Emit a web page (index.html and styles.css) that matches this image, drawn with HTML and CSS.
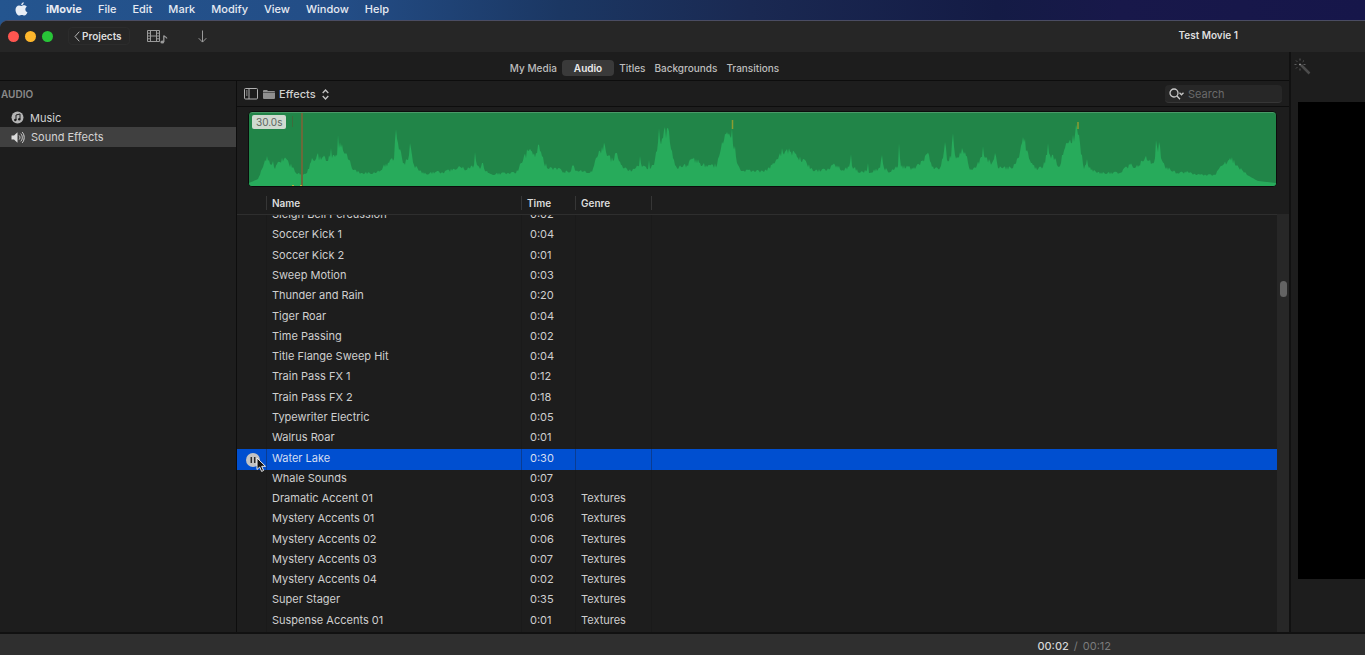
FILE: index.html
```
<!DOCTYPE html>
<html lang="en">
<head>
    <meta charset="UTF-8">
    <meta name="viewport" content="width=device-width, initial-scale=1.0">
    <title>iMovie</title>
    <link rel="stylesheet" href="styles.css">
</head>
<body>

    <nav class="menubar">
        <button class="apple" aria-label="Apple menu">
            <svg width="13" height="14" viewBox="0 0 13 14"><path fill="#e8eef6" d="M8.8 0.2c.1 1.5-1.2 2.9-2.6 2.9C6 1.700 7.300.4 8.800.2zM6.500 3.900c.5 0 1.400-.7 2.500-.7 1.300 0 2.300.6 2.900 1.500-2.300 1.400-1.900 4.500.5 5.500-.6 1.500-1.700 3.400-3 3.400-1 0-1.400-.6-2.600-.6s-1.600.6-2.500.6C2.300 13.600.5 10.500.5 7.700c0-2.700 1.700-4.300 3.500-4.300 1.100 0 1.900.5 2.500.5z"/></svg>
        </button>
        <button class="app-name">iMovie</button>
        <button>File</button>
        <button>Edit</button>
        <button>Mark</button>
        <button>Modify</button>
        <button>View</button>
        <button>Window</button>
        <button>Help</button>
    </nav>

    <div class="window">
        <header class="toolbar">
            <div class="lights">
                <button class="light red" aria-label="Close"></button>
                <button class="light yellow" aria-label="Minimize"></button>
                <button class="light green" aria-label="Zoom"></button>
            </div>
            <button class="projects">
                <svg width="6" height="11" viewBox="0 0 6 11"><path d="M5.300.7L1 5.500l4.300 4.800" fill="none" stroke="#b8b8b8"/></svg>
                Projects
            </button>
            <button class="tool media" aria-label="Media">
                <svg width="21" height="15" viewBox="0 0 21 15" fill="none" stroke="#9a9a9a">
                    <path d="M.5 1.500h12v11H.5zM3.500 1.500v11M9.500 1.500v11M3.500 7h6M.5 4.200h3M.5 7h3M.5 9.800h3M9.500 4.200h3M9.500 7h3M9.500 9.800h3"/>
                    <path d="M16.800 13V6.500c.5 1.500 2.700 1 3 3" stroke-width="1.300"/>
                    <ellipse cx="15.300" cy="13" rx="1.900" ry="1.500" fill="#9a9a9a" stroke="none"/>
                </svg>
            </button>
            <button class="tool" aria-label="Import">
                <svg width="9" height="13" viewBox="0 0 9 13"><path d="M4.500.5v11.500M.7 8.200l3.800 3.900 3.800-3.900" fill="none" stroke="#9a9a9a"/></svg>
            </button>
            <h1 class="title">Test Movie 1</h1>
        </header>

        <main class="panes">
            <section class="browser">
                <div class="tabs">
                    <button class="tab">My Media</button>
                    <button class="tab active">Audio</button>
                    <button class="tab">Titles</button>
                    <button class="tab">Backgrounds</button>
                    <button class="tab">Transitions</button>
                </div>

                <div class="library">
                    <aside class="sidebar">
                        <h2>AUDIO</h2>
                        <button class="source">
                            <svg width="13" height="13" viewBox="0 0 13 13"><circle cx="6.500" cy="6.500" r="6" fill="#b4b4b4"/><path d="M5 9V4l4-1v5" fill="none" stroke="#1e1e1e"/><circle cx="4.300" cy="9" r="1.200" fill="#1e1e1e"/><circle cx="8.300" cy="8.200" r="1.200" fill="#1e1e1e"/></svg>
                            Music
                        </button>
                        <button class="source selected">
                            <svg width="14" height="13" viewBox="0 0 14 13"><path d="M.5 4.500H3L6.500 1.200v10.600L3 8.500H.5z" fill="#dcdcdc"/><path d="M8.200 4.500c1 1.200 1 2.800 0 4M9.800 2.700c2 2.200 2 5.400 0 7.600M11.300 1.200c2.500 3 2.500 7.600 0 10.600" fill="none" stroke="#dcdcdc"/></svg>
                            Sound Effects
                        </button>
                    </aside>

                    <div class="content">
                        <div class="pathbar">
                            <button class="tool" aria-label="Toggle sidebar">
                                <svg width="14" height="12" viewBox="0 0 14 12" fill="none" stroke="#b0b0b0"><rect x=".5" y=".5" width="13" height="10.500" rx="1"/><path d="M5 .5v10.500M2 3h1.500M2 5h1.500M2 7h1.500"/></svg>
                            </button>
                            <label for="folder" aria-label="Folder">
                                <svg width="12" height="9" viewBox="0 0 12 9"><path d="M0 1q0-1 1-1h3l1 1h6q1 0 1 1v6q0 1-1 1H1q-1 0-1-1z" fill="#8f8f8f"/><path d="M0 2.500h12" stroke="#555"/></svg>
                            </label>
                            <select id="folder">
                                <option>Effects</option>
                            </select>
                            <svg class="updown" width="7" height="11" viewBox="0 0 7 11"><path d="M.7 4L3.500 1l2.800 3M.7 7l2.800 3 2.800-3" fill="none" stroke="#c4c4c4" stroke-width="1.300"/></svg>
                            <label class="search">
                                <svg width="16" height="12" viewBox="0 0 16 12" fill="none" stroke="#c8c8c8" stroke-width="1.300"><circle cx="5" cy="5" r="4"/><path d="M8 8l3 3.300M10.500 4.800l2 2 2-2"/></svg>
                                <input type="text" placeholder="Search" aria-label="Search">
                            </label>
                        </div>

                        <div class="clip">
                            <svg class="waveform" viewBox="0 0 1027 74" preserveAspectRatio="none">
                                <path id="wave" fill="#27ab5b"/>
                                <path d="M483.500 8v9M829 10v7" stroke="#8c9c32" stroke-width="1.500"/>
                                <path d="M43.500 4v11" stroke="#3d6c3c"/>
                                <path d="M53 1v73" stroke="#6a6a3a" stroke-width="2"/>
                                <path d="M43 73.500h2M51 73.500h2" stroke="#b5b53c"/>
                            </svg>
                            <span class="duration">30.0s</span>
                        </div>

                        <div class="list">
                            <div class="scroller" id="scroller">
                                <table class="sounds">
                                    <colgroup>
                                        <col class="col-play"><col class="col-name"><col class="col-time"><col class="col-genre"><col>
                                    </colgroup>
                                    <thead>
                                        <tr><th></th><th>Name</th><th>Time</th><th>Genre</th><th></th></tr>
                                    </thead>
                                    <tbody>
                                        <tr><td></td><td>Sleigh Bell Percussion</td><td>0:02</td><td></td><td></td></tr>
                                        <tr><td></td><td>Soccer Kick 1</td><td>0:04</td><td></td><td></td></tr>
                                        <tr><td></td><td>Soccer Kick 2</td><td>0:01</td><td></td><td></td></tr>
                                        <tr><td></td><td>Sweep Motion</td><td>0:03</td><td></td><td></td></tr>
                                        <tr><td></td><td>Thunder and Rain</td><td>0:20</td><td></td><td></td></tr>
                                        <tr><td></td><td>Tiger Roar</td><td>0:04</td><td></td><td></td></tr>
                                        <tr><td></td><td>Time Passing</td><td>0:02</td><td></td><td></td></tr>
                                        <tr><td></td><td>Title Flange Sweep Hit</td><td>0:04</td><td></td><td></td></tr>
                                        <tr><td></td><td>Train Pass FX 1</td><td>0:12</td><td></td><td></td></tr>
                                        <tr><td></td><td>Train Pass FX 2</td><td>0:18</td><td></td><td></td></tr>
                                        <tr><td></td><td>Typewriter Electric</td><td>0:05</td><td></td><td></td></tr>
                                        <tr><td></td><td>Walrus Roar</td><td>0:01</td><td></td><td></td></tr>
                                        <tr class="playing">
                                            <td>
                                                <button class="pause" aria-label="Pause">
                                                    <svg width="14" height="14" viewBox="0 0 14 14"><circle cx="7" cy="7" r="7" fill="#c3c3c3"/><path d="M5.300 4v6M8.700 4v6" stroke="#2b2b2b" stroke-width="1.500"/></svg>
                                                </button>
                                                <svg class="pointer" width="11" height="16" viewBox="0 0 11 16"><path d="M1 1v11.500l2.700-2.500 1.900 4.400 2-.9-1.900-4.200h3.800z" fill="#111" stroke="#eee"/></svg>
                                            </td>
                                            <td>Water Lake</td><td>0:30</td><td></td><td></td>
                                        </tr>
                                        <tr><td></td><td>Whale Sounds</td><td>0:07</td><td></td><td></td></tr>
                                        <tr><td></td><td>Dramatic Accent 01</td><td>0:03</td><td>Textures</td><td></td></tr>
                                        <tr><td></td><td>Mystery Accents 01</td><td>0:06</td><td>Textures</td><td></td></tr>
                                        <tr><td></td><td>Mystery Accents 02</td><td>0:06</td><td>Textures</td><td></td></tr>
                                        <tr><td></td><td>Mystery Accents 03</td><td>0:07</td><td>Textures</td><td></td></tr>
                                        <tr><td></td><td>Mystery Accents 04</td><td>0:02</td><td>Textures</td><td></td></tr>
                                        <tr><td></td><td>Super Stager</td><td>0:35</td><td>Textures</td><td></td></tr>
                                        <tr><td></td><td>Suspense Accents 01</td><td>0:01</td><td>Textures</td><td></td></tr>
                                    </tbody>
                                </table>
                            </div>
                            <div class="scrollbar"><div class="thumb"></div></div>
                        </div>
                    </div>
                </div>
            </section>

            <section class="viewer">
                <button class="tool wand" aria-label="Enhance">
                    <svg width="17" height="17" viewBox="0 0 17 17" fill="none" stroke="#5c5c5c"><path d="M7 7l8.500 8.500" stroke-width="2.500" stroke="#4c4c4c"/><path d="M6 5.500v2M5 6.500h2" stroke="#8a8a8a"/><path d="M6 .5v2M2 2.500l1.300 1.300M.5 6.500h2M2 10.500l1.300-1.300M6 10.500v2M10 2.500L8.700 3.800M9.500 6.500h2"/></svg>
                </button>
                <div class="screen"></div>
            </section>
        </main>

        <footer class="timebar">
            <span class="current">00:02</span>
            <span>/</span>
            <span>00:12</span>
        </footer>
    </div>

    <script>
        // x, y pairs along the top edge of the waveform
        const points = [
            0,71, 9,67, 14,55, 18,44, 20,48, 22,53, 24,49, 26,57, 30,50, 35,47, 40,52, 44,55, 47,61, 54,63, 58,61,
            62,50, 68,43, 72,48, 74,45, 77,49, 81,45, 82,36, 83,46, 86,45, 88,44, 89,23, 90,36, 93,32, 97,41, 102,53,
            105,58, 112,61, 127,61, 134,55, 140,51, 145,47, 147,17, 149,31, 150,38, 153,46, 155,51, 159,48, 161,31,
            163,43, 165,53, 170,59, 177,62, 187,60, 194,61, 204,57, 210,54, 217,58, 225,53, 226,40, 228,53, 231,57,
            234,51, 236,59, 242,62, 267,61, 270,56, 272,51, 279,39, 284,43, 287,41, 289,33, 292,40, 295,51, 300,57,
            307,56, 315,60, 322,59, 324,53, 327,59, 343,60, 346,49, 351,39, 356,34, 359,44, 364,49, 367,41, 370,49,
            374,56, 383,59, 390,54, 391,44, 393,55, 399,57, 400,48, 401,57, 405,53, 408,39, 410,16, 411,28, 414,26,
            416,15, 417,26, 419,16, 421,31, 424,46, 428,56, 438,53, 444,47, 451,51, 458,55, 468,53, 471,41, 475,28,
            478,20, 482,26, 483,16, 484,33, 486,34, 488,51, 493,59, 518,59, 524,51, 531,41, 538,37, 548,45, 558,52,
            564,59, 578,58, 586,53, 594,58, 600,55, 602,42, 603,54, 611,61, 618,58, 619,51, 620,61, 631,56, 633,43,
            635,56, 641,60, 649,54, 650,31, 652,55, 659,55, 664,57, 673,49, 680,43, 683,55, 691,56, 694,46, 696,30,
            698,48, 702,46, 704,21, 706,43, 709,46, 711,40, 716,40, 721,58, 728,53, 733,45, 734,34, 736,46, 743,51,
            746,41, 749,56, 764,56, 769,46, 774,25, 778,38, 783,51, 786,57, 794,55, 798,43, 799,31, 801,43, 806,46,
            810,55, 816,36, 823,31, 828,16, 829,23, 833,43, 835,57, 838,47, 840,56, 848,61, 871,61, 881,53, 889,55,
            896,46, 903,51, 906,46, 907,28, 909,40, 910,30, 912,46, 916,55, 928,61, 939,60, 948,63, 966,63, 973,54,
            981,46, 988,53, 998,63, 1009,69, 1027,71
        ];

        function drawWave() {
            let path = "M0 74";
            for (let i = 0; i < points.length - 2; i += 2) {
                const x0 = points[i], y0 = points[i + 1];
                const x1 = points[i + 2], y1 = points[i + 3];
                for (let x = x0; x < x1; x++) {
                    const y = y0 + (y1 - y0) * (x - x0) / (x1 - x0);
                    // small ripple between the peaks, none on the quiet ends
                    const ripple = x === x0 || y > 63 ? 0 : Math.sin(x * x * 12.9) * (70 - y) * 0.13;
                    path += ` L${x} ${(y + ripple).toFixed(1)}`;
                }
            }
            document.getElementById("wave").setAttribute("d", path + " L1027 71 L1027 74 Z");
        }

        drawWave();
        document.getElementById("scroller").scrollTop = 9;
    </script>

</body>
</html>
```
FILE: styles.css
```
* {
    box-sizing: border-box;
}

body {
    margin: 0;
    height: 100vh;
    display: flex;
    flex-direction: column;
    overflow: hidden;
    font-family: Inter, "Liberation Sans", sans-serif;
    font-size: 11px;
    line-height: 14px;
    color: #cfcfcf;
    background: linear-gradient(90deg, #24558f 0%, #234d86 25%, #1b3763 41%, #1a2952 55%, #141b45 73%, #18184a 82%, #16164a 100%);
}

button, input, select {
    font: inherit;
    color: inherit;
    background: none;
    border: none;
    padding: 0;
    margin: 0;
}

svg {
    display: block;
    flex: none;
}

.menubar {
    flex: none;
    height: 20px;
    display: flex;
    align-items: center;
    gap: 16px;
    padding-left: 15px;
    padding-bottom: 2px;
    color: #e6eaf2;
    font-weight: 500;
}

.menubar .apple {
    margin-right: 2px;
}

.menubar .app-name {
    font-weight: 700;
}

.window {
    flex: 1;
    min-height: 0;
    display: flex;
    flex-direction: column;
    background: #1d1d1d;
    border-top: 1px solid #4a4c62;
    border-top-left-radius: 8px;
    overflow: hidden;
}

.toolbar {
    flex: none;
    height: 31px;
    display: flex;
    align-items: center;
    padding: 0 127px 1px 8px;
    background: #262626;
}

.lights {
    display: flex;
    gap: 6px;
    margin-right: 15px;
}

.light {
    width: 11px;
    height: 11px;
    border-radius: 50%;
}

.red {
    background: #fe5650;
}

.yellow {
    background: #fdb62c;
}

.green {
    background: #28c538;
}

.projects {
    height: 18px;
    display: flex;
    align-items: center;
    gap: 2px;
    padding: 0 7px 0 5px;
    border: 1px solid #2c2c2c;
    border-radius: 4px;
    color: #dedede;
    font-weight: 600;
    font-size: 10px;
}

.media {
    margin: 0 30px 0 17px;
}

.title {
    margin: 0 0 0 auto;
    padding-bottom: 3px;
    font-size: 10px;
    font-weight: 600;
    color: #dedede;
}

.panes {
    flex: 1;
    min-height: 0;
    display: flex;
}

.browser {
    flex: 1;
    min-width: 0;
    display: flex;
    flex-direction: column;
    border-right: 2px solid #111;
}

.tabs {
    flex: none;
    height: 29px;
    display: flex;
    align-items: center;
    justify-content: center;
    gap: 1px;
    padding-top: 3px;
    border-bottom: 1px solid #0d0d0d;
    font-size: 10px;
}

.tab {
    height: 16px;
    padding: 0 4px;
    border-radius: 4px;
    color: #bdbdbd;
    font-weight: 500;
}

.tab.active {
    padding: 0 12px;
    background: #3a3a3a;
    color: #ececec;
    font-weight: 600;
}

.library {
    flex: 1;
    min-height: 0;
    display: flex;
}

.sidebar {
    flex: none;
    width: 237px;
    border-right: 1px solid #0d0d0d;
}

.sidebar h2 {
    margin: 6px 0 7px 1px;
    font-size: 10px;
    line-height: 14px;
    font-weight: 600;
    color: #8a8a8a;
}

.source {
    width: 100%;
    height: 19px;
    display: flex;
    align-items: center;
    gap: 6px;
    padding-left: 11px;
    color: #d4d4d4;
}

.source.selected {
    height: 20px;
    background: #404040;
}

.content {
    flex: 1;
    min-width: 0;
    display: flex;
    flex-direction: column;
}

.pathbar {
    flex: none;
    height: 26px;
    display: flex;
    align-items: center;
    padding: 1px 7px 0;
    border-bottom: 1px solid #0d0d0d;
}

.pathbar .tool {
    margin-right: 5px;
}

#folder {
    appearance: none;
    margin: 0 6px 0 4px;
    color: #d0d0d0;
    font-weight: 500;
}

.search {
    width: 117px;
    height: 18px;
    display: flex;
    align-items: center;
    gap: 3px;
    margin-left: auto;
    padding-left: 4px;
    border-radius: 4px;
    background: #272727;
    border-bottom: 1px solid #363636;
}

.search input {
    flex: 1;
    min-width: 0;
    outline: none;
}

.search input::placeholder {
    color: #6a6a6a;
}

.clip {
    position: relative;
    flex: none;
    height: 76px;
    margin: 4px 12px 5px 11px;
    border: 1px solid #0c0c0c;
    border-radius: 4px;
    background: #218548;
    box-shadow: inset 0 1px #4a9a68;
    overflow: hidden;
}

.waveform {
    width: 100%;
    height: 100%;
}

.duration {
    position: absolute;
    top: 3px;
    left: 3px;
    padding: 0 4px;
    border-radius: 2px;
    background: #cfdad0;
    color: #5c645e;
    font-size: 10px;
}

.list {
    flex: 1;
    min-height: 0;
    display: flex;
}

.scroller {
    flex: 1;
    min-width: 0;
    overflow: hidden;
}

.sounds {
    width: 100%;
    height: calc(100% + 9px);
    table-layout: fixed;
    border-collapse: separate;
    border-spacing: 0;
}

.col-play {
    width: 30px;
}

.col-name {
    width: 255px;
}

.col-time {
    width: 54px;
}

.col-genre {
    width: 76px;
}

.sounds th {
    position: sticky;
    top: 0;
    z-index: 1;
    height: 23px;
    padding: 0 5px;
    text-align: left;
    font-size: 10px;
    font-weight: 600;
    color: #dcdcdc;
    background: linear-gradient(#363636, #363636) right 4px / 1px 14px no-repeat #1d1d1d;
    border-bottom: 1px solid #2e2e2e;
}

.sounds th:last-child {
    background: #1d1d1d;
}

.sounds td {
    position: relative;
    padding: 0 5px 4px;
    line-height: 14px;
    white-space: nowrap;
    border-right: 1px solid #1a1a1a;
}

.sounds td:nth-child(3) {
    padding-left: 8px;
}

.sounds td:last-child {
    border-right: none;
}

.sounds .playing td {
    background: #004fd0;
    border-right-color: #0a3c92;
    color: #d4def2;
}

.sounds .playing td:first-child {
    padding: 0 0 0 9px;
}

.pause {
    display: block;
}

.pointer {
    position: absolute;
    left: 19px;
    top: 8px;
    z-index: 1;
}

.scrollbar {
    flex: none;
    width: 12px;
    margin-top: 22px;
    padding: 67px 2px 0 3px;
    background: #272727;
}

.thumb {
    height: 16px;
    border-radius: 4px;
    background: #636363;
}

.viewer {
    flex: none;
    width: 74px;
    padding-left: 7px;
}

.wand {
    display: block;
    margin: 6px 0 27px -4px;
}

.screen {
    height: 477px;
    background: #000;
}

.timebar {
    flex: none;
    height: 23px;
    display: flex;
    align-items: center;
    gap: 5px;
    padding: 3px 0 0 76%;
    background: #2f2f2f;
    border-top: 2px solid #111;
    color: #7c7c7c;
}

.timebar .current {
    color: #d6d6d6;
    font-weight: 500;
}
```
